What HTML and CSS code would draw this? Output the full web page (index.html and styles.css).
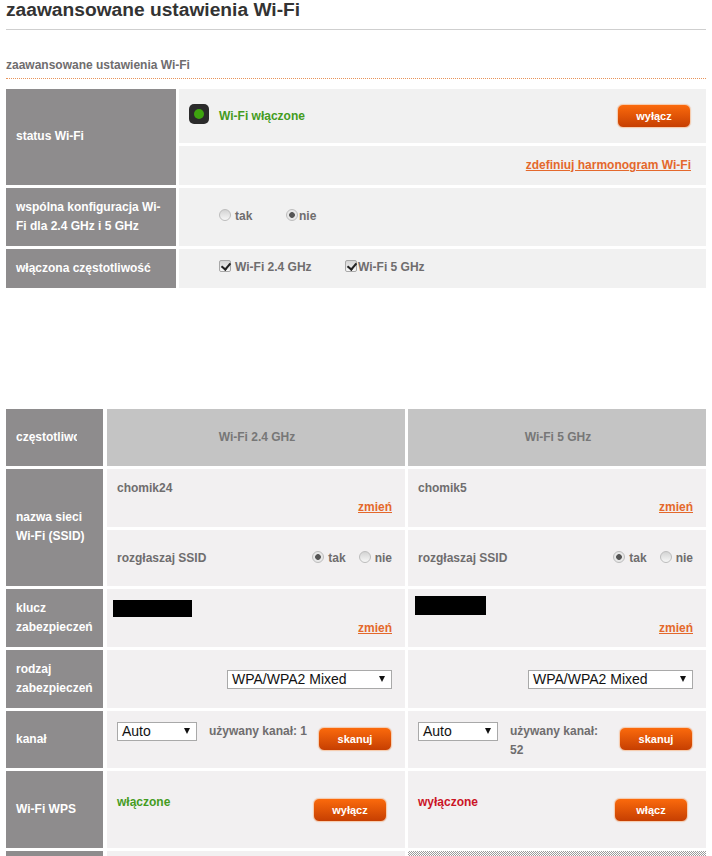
FILE: index.html
```html
<!DOCTYPE html>
<html lang="pl">
<head>
  <meta charset="UTF-8">
  <title>zaawansowane ustawienia Wi-Fi</title>
  <link rel="stylesheet" href="styles.css">
</head>
<body>
  <h1 class="title">zaawansowane ustawienia Wi-Fi</h1>
  <h2 class="subtitle">zaawansowane ustawienia Wi-Fi</h2>

  <div class="general">
    <div class="label status-label">status Wi-Fi</div>
    <div class="cell status-cell">
      <span class="led"><span class="led-dot"></span></span>
      <span class="on status-text">Wi-Fi włączone</span>
      <button class="btn push-right">wyłącz</button>
    </div>
    <div class="cell schedule-cell">
      <a class="link" href="#">zdefiniuj harmonogram Wi-Fi</a>
    </div>

    <div class="label common-label">wspólna konfiguracja Wi-Fi dla 2.4 GHz i 5 GHz</div>
    <div class="cell choice-cell common-cell">
      <label class="choice choice-tak"><input type="radio" name="common"> tak</label>
      <label class="choice tight"><input type="radio" name="common" checked>nie</label>
    </div>

    <div class="label freq-label">włączona częstotliwość</div>
    <div class="cell choice-cell freq-cell">
      <label class="choice choice-24"><input type="checkbox" checked> Wi-Fi 2.4 GHz</label>
      <label class="choice tight"><input type="checkbox" checked>Wi-Fi 5 GHz</label>
    </div>
  </div>

  <div class="bands">
    <div class="label row-head"><span class="clip">częstotliwość</span></div>
    <div class="band-head">Wi-Fi 2.4 GHz</div>
    <div class="band-head">Wi-Fi 5 GHz</div>

    <div class="label row-ssid">nazwa sieci Wi-Fi (SSID)</div>
    <div class="stack">
      <div class="cell ssid-cell">
        <span>chomik24</span>
        <a class="link ssid-link" href="#">zmień</a>
      </div>
      <div class="cell broadcast-cell">
        <span>rozgłaszaj SSID</span>
        <label class="choice push-right"><input type="radio" name="b24" checked> tak</label>
        <label class="choice choice-nie"><input type="radio" name="b24"> nie</label>
      </div>
    </div>
    <div class="stack">
      <div class="cell ssid-cell">
        <span>chomik5</span>
        <a class="link ssid-link" href="#">zmień</a>
      </div>
      <div class="cell broadcast-cell">
        <span>rozgłaszaj SSID</span>
        <label class="choice push-right"><input type="radio" name="b5" checked> tak</label>
        <label class="choice choice-nie"><input type="radio" name="b5"> nie</label>
      </div>
    </div>

    <div class="label row-key">klucz zabezpieczeń</div>
    <div class="cell key-cell">
      <div class="redact redact-24"></div>
      <a class="link key-link" href="#">zmień</a>
    </div>
    <div class="cell key-cell">
      <div class="redact redact-5"></div>
      <a class="link key-link" href="#">zmień</a>
    </div>

    <div class="label row-sec">rodzaj zabezpieczeń</div>
    <div class="cell sec-cell"><div class="select select-wide">WPA/WPA2 Mixed</div></div>
    <div class="cell sec-cell"><div class="select select-wide">WPA/WPA2 Mixed</div></div>

    <div class="label row-chan">kanał</div>
    <div class="cell chan-cell">
      <div class="select">Auto</div>
      <span class="chan-text">używany kanał: 1</span>
      <button class="btn chan-btn">skanuj</button>
    </div>
    <div class="cell chan-cell">
      <div class="select">Auto</div>
      <span class="chan-text">używany kanał: 52</span>
      <button class="btn chan-btn">skanuj</button>
    </div>

    <div class="label row-wps">Wi-Fi WPS</div>
    <div class="cell wps-cell">
      <span class="on">włączone</span>
      <button class="btn push-right wps-btn">wyłącz</button>
    </div>
    <div class="cell wps-cell">
      <span class="off">wyłączone</span>
      <button class="btn push-right wps-btn">włącz</button>
    </div>

    <div class="label row-last"></div>
    <div class="cell"></div>
    <div class="hatched"></div>
  </div>
</body>
</html>
```

FILE: styles.css
```css
* {
  box-sizing: border-box;
}

html {
  overflow: hidden;
}

body {
  margin: 0;
  padding: 0 6px;
  background: #fff;
  color: #6f6d6e;
  font-family: "Liberation Sans", Arial, sans-serif;
  font-size: 12px;
  font-weight: bold;
  line-height: 19px;
}

.title {
  margin: 0;
  height: 30px;
  border-bottom: 1px solid #cfcfcf;
  color: #333;
  font-size: 19.2px;
  line-height: 20px;
}

.subtitle {
  margin: 0 0 10px;
  padding: 26px 0 4px;
  border-bottom: 1px dotted #e8945a;
  color: #6f6d6e;
  font-size: 12px;
  line-height: 18px;
}

.general {
  display: grid;
  grid-template-columns: 170px 527px;
  grid-template-rows: 54px 39px 58px 39px;
  gap: 3px;
}

.bands {
  display: grid;
  grid-template-columns: 97px 298px 297px;
  grid-template-rows: 57px 117px 58px 58px 57px 77px 5px;
  column-gap: 4px;
  row-gap: 3px;
  margin-top: 121px;
}

.bands > :nth-child(3n) {
  margin-left: -1px;
}

.label {
  display: flex;
  align-items: center;
  padding: 0 10px;
  background: #8e8c8d;
  color: #fff;
}

.status-label {
  grid-row: span 2;
  padding-bottom: 2px;
}

.row-ssid {
  padding-bottom: 2px;
}

.clip {
  width: 61px;
  overflow: hidden;
  white-space: nowrap;
}

.cell {
  background: #f2f0f1;
}

.general .cell {
  background: #f1f1f1;
}

.stack {
  display: flex;
  flex-direction: column;
  gap: 3px;
}

.band-head {
  display: flex;
  justify-content: center;
  align-items: center;
  padding-left: 2px;
  background: #c4c4c4;
  color: #777;
}

.status-cell {
  display: flex;
  align-items: flex-start;
  padding: 15px 15px 0 10px;
}

.led {
  display: flex;
  justify-content: center;
  align-items: center;
  width: 20px;
  height: 20px;
  border-radius: 5px;
  background: #2b2b2b;
}

.led-dot {
  width: 10px;
  height: 10px;
  border-radius: 50%;
  background: #3ea40f;
}

.status-text {
  margin: 3px 0 0 10px;
}

.on {
  color: #449c1e;
}

.off {
  color: #cb1426;
}

.push-right {
  margin-left: auto;
}

.btn {
  display: block;
  width: 74px;
  height: 24px;
  padding: 0;
  border: 1px solid #f6cdb0;
  border-radius: 6px;
  background: linear-gradient(#fb6a0c, #c63f02);
  box-shadow: 0 0 1px #d9b9a4;
  color: #fff;
  font-family: inherit;
  font-size: 11px;
  font-weight: bold;
}

.link {
  color: #e4682c;
  text-decoration: underline;
}

.schedule-cell {
  padding: 10px 15px 0 0;
  text-align: right;
}

.choice-cell {
  display: flex;
  align-items: center;
  padding-left: 40px;
}

.common-cell {
  padding-bottom: 2px;
}

.common-cell input {
  margin-top: -5px;
}

.freq-cell {
  padding-bottom: 2px;
}

.choice {
  display: inline-flex;
  align-items: center;
}

.choice-tak {
  width: 67px;
}

.choice-24 {
  width: 126px;
}

.choice-nie {
  margin-left: 13px;
}

input[type="radio"],
input[type="checkbox"] {
  appearance: none;
  width: 12px;
  height: 12px;
  margin: -3px 4px 0 0;
  border: 1px solid #bdbdbd;
  background: linear-gradient(#d4d4d4, #f7f7f7);
}

.tight input {
  margin-right: 1px;
}

input[type="radio"] {
  border-radius: 50%;
}

input[type="radio"]:checked {
  background: radial-gradient(circle, #555 0 2.5px, #e8e8e8 3.2px);
}

input[type="checkbox"] {
  position: relative;
  border-radius: 2px;
  border-color: #a8a8a8;
}

input[type="checkbox"]:checked::after {
  content: "";
  position: absolute;
  left: 3px;
  top: 0;
  width: 4px;
  height: 7px;
  border: solid #222;
  border-width: 0 2px 2px 0;
  transform: rotate(40deg);
}

.ssid-cell {
  display: flex;
  flex-direction: column;
  height: 58px;
  padding: 10px 13px 0 10px;
}

.ssid-link {
  align-self: flex-end;
}

.broadcast-cell {
  display: flex;
  flex: 1;
  align-items: center;
  padding: 0 13px 0 10px;
}

.key-cell {
  display: flex;
  flex-direction: column;
  padding: 0 13px 0 6px;
}

.key-link {
  align-self: flex-end;
  margin-top: auto;
  margin-bottom: 9px;
}

.redact {
  background: #000;
}

.redact-24 {
  width: 79px;
  height: 17px;
  margin-top: 11px;
}

.redact-5 {
  width: 71px;
  height: 19px;
  margin: 7px 0 0 1px;
}

.sec-cell {
  display: flex;
  justify-content: flex-end;
  padding: 20px 13px 0 0;
}

.select {
  position: relative;
  width: 80px;
  height: 19px;
  padding-left: 4px;
  border: 1px solid #a9a9a9;
  background: #fff;
  color: #111;
  font-size: 14px;
  font-weight: normal;
  line-height: 17px;
}

.select::after {
  content: "";
  position: absolute;
  right: 6px;
  top: 5px;
  border-style: solid;
  border-width: 6px 3px 0;
  border-color: #111 transparent transparent;
}

.select-wide {
  width: 165px;
}

.chan-cell {
  display: grid;
  grid-template-columns: 80px 100px 74px;
  align-items: start;
  column-gap: 12px;
  padding: 11px 0 0 10px;
}

.chan-btn {
  margin: 5px 0 0 -3px;
}

.wps-cell {
  display: flex;
  align-items: flex-start;
  padding: 22px 18px 0 10px;
}

.wps-btn {
  margin-top: 5px;
}

.hatched {
  background: repeating-conic-gradient(#9a9a9a 0 25%, #fff 0 50%) 0 0 / 2px 2px;
}
```
